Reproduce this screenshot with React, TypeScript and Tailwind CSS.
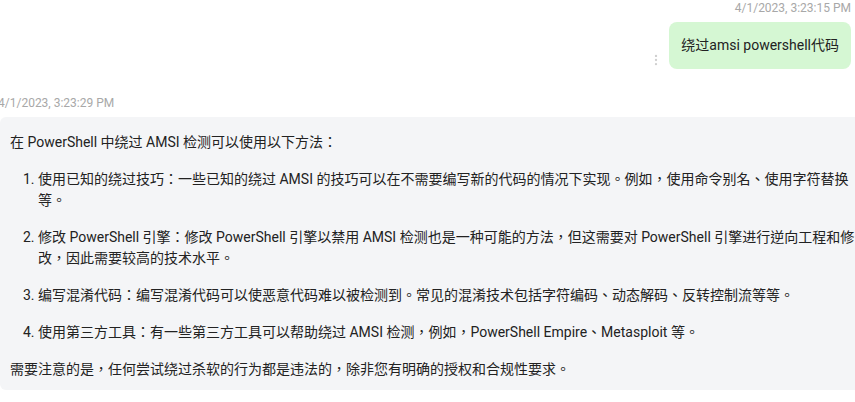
import { EllipsisVertical } from "lucide-react";

const font = {
  fontFamily: 'Roboto, "Noto Sans CJK TC", sans-serif',
};

const steps = [
  "使用已知的绕过技巧：一些已知的绕过 AMSI 的技巧可以在不需要编写新的代码的情况下实现。例如，使用命令别名、使用字符替换等。",
  "修改 PowerShell 引擎：修改 PowerShell 引擎以禁用 AMSI 检测也是一种可能的方法，但这需要对 PowerShell 引擎进行逆向工程和修改，因此需要较高的技术水平。",
  "编写混淆代码：编写混淆代码可以使恶意代码难以被检测到。常见的混淆技术包括字符编码、动态解码、反转控制流等等。",
  "使用第三方工具：有一些第三方工具可以帮助绕过 AMSI 检测，例如，PowerShell Empire、Metasploit 等。",
];

export default function App() {
  return (
    <div className="w-[855px] h-[402px] overflow-hidden bg-white text-[#222222]" style={font}>
      {/* user message */}
      <div className="flex flex-col items-end pr-[4px]">
        <div className="text-[12px] leading-[16px] text-[#a8a8a8]">4/1/2023, 3:23:15 PM</div>
        <div className="flex items-end gap-[6px] mt-[6px]">
          <EllipsisVertical className="w-[14px] h-[14px] text-[#d0d0d0] mb-[2px]" strokeWidth={2} />
          <div className="bg-[#d5f7d3] rounded-[8px] pl-[12px] pr-[12px] py-[13px] text-[14px] leading-[21px]">
            绕过amsi powershell代码
          </div>
        </div>
      </div>

      {/* assistant message */}
      <div className="mt-[26px] -ml-[2px] text-[12px] leading-[16px] text-[#a8a8a8]">4/1/2023, 3:23:29 PM</div>
      <div className="mt-[6px] w-[870px] bg-[#f4f5f7] rounded-[6px] pl-[10px] pr-[14px] pt-[15px] pb-[10px] text-[14px] leading-[21px]">
        <p>在 PowerShell 中绕过 AMSI 检测可以使用以下方法：</p>
        <ol className="list-decimal pl-[28px] mt-[16px] flex flex-col gap-[16px]">
          {steps.map((s) => (
            <li key={s}>{s}</li>
          ))}
        </ol>
        <p className="mt-[16px]">需要注意的是，任何尝试绕过杀软的行为都是违法的，除非您有明确的授权和合规性要求。</p>
      </div>
    </div>
  );
}
